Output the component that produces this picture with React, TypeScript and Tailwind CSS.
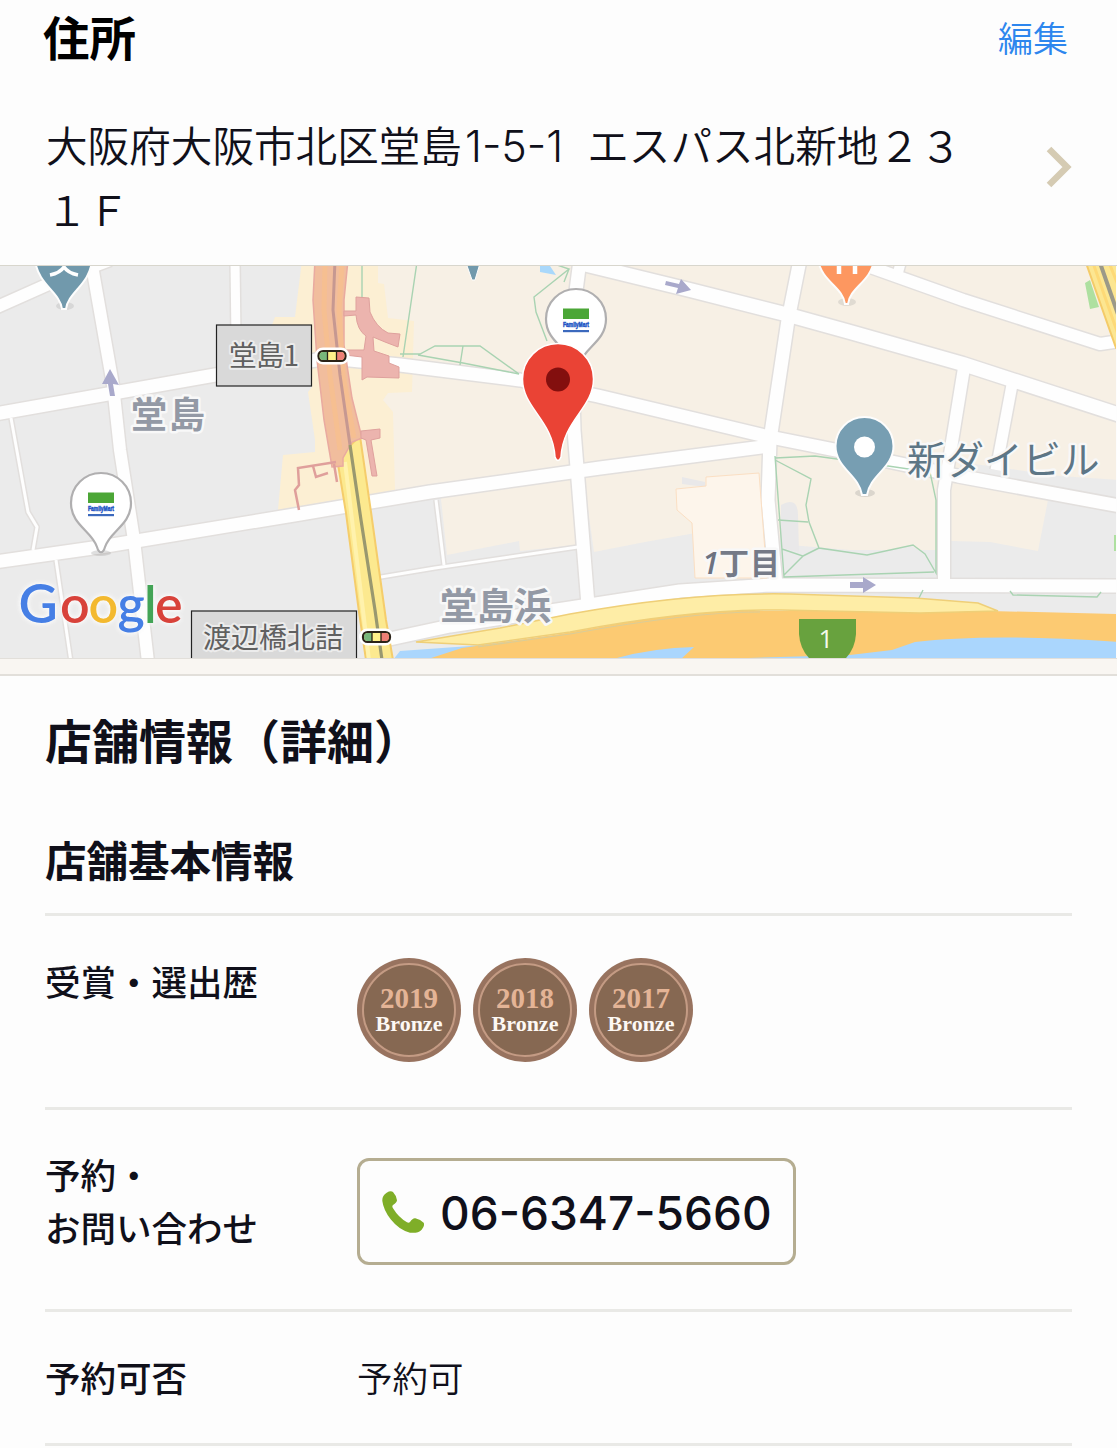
type Road = { d: string; w: number }

const roads: Road[] = [
    { d: "M-5 308 L60 279 L110 260", w: 12 },
    { d: "M91 260 L113 385 L120 450 L134 540 L148 662", w: 12 },
    { d: "M235 260 L236 340", w: 9 },
    { d: "M-5 414 L215 375 L330 358 L400 365 L520 380 L598 396 L765 436 L840 451 L958 476 L1120 506", w: 13 },
    { d: "M-5 562 L100 547 L300 514 L430 492 L600 468 L770 446", w: 13 },
    { d: "M580 260 L571 330 L574 430 L588 605", w: 13 },
    { d: "M575 262 L690 290 L785 314 L850 332 L963 364 L1120 415", w: 14 },
    { d: "M862 264 L963 300 L1100 344 L1120 341", w: 12 },
    { d: "M902 258 L897 276", w: 10 },
    { d: "M800 260 L788 320 L770 440 L768 500 L776 585", w: 13 },
    { d: "M964 368 L951 448 L944 490 L944 585", w: 12 },
    { d: "M1012 385 L996 470", w: 11 },
    { d: "M385 640 L450 626 L570 608 L680 591 L770 585 L1120 586", w: 13 },
    { d: "M375 578 L435 568 L578 547", w: 3 },
    { d: "M436 500 L444 565", w: 3 },
    { d: "M11 418 L28 512 L37 527 L33 550", w: 3 },
    { d: "M56 560 L71 662", w: 3 },
]

const logoLetters = [
    { char: "G", x: 18.5, color: "#467fe5" },
    { char: "o", x: 60, color: "#d8423a" },
    { char: "o", x: 88.5, color: "#f3b92f" },
    { char: "g", x: 117.5, color: "#467fe5" },
    { char: "l", x: 144, color: "#43a456" },
    { char: "e", x: 155, color: "#d8423a" },
]

const awards = ["2019", "2018", "2017"]

function StorePin({ x, y }: { x: number; y: number }) {
    return (
        <g transform={`translate(${x} ${y})`}>
            <ellipse cx="0" cy="50" rx="10" ry="3" fill="#999" opacity="0.3" />
            <path d="M0 -30 A30 30 0 0 1 30 0 C30 22 9 28 4 44 C2 51 -2 51 -4 44 C-9 28 -30 22 -30 0 A30 30 0 0 1 0 -30Z" fill="#fff" stroke="#b0afb0" strokeWidth="2.2" />
            <rect x="-13" y="-10.500" width="26" height="10.500" fill="#4ba636" />
            <text x="-13" y="8" fontSize="8" fontWeight="900" textLength="26" lengthAdjust="spacingAndGlyphs" fill="#2457c5" stroke="#2457c5" strokeWidth=".6" fontFamily="Liberation Sans, sans-serif">FamilyMart</text>
            <rect x="-13" y="11" width="26" height="2.2" fill="#3c69bd" />
        </g>
    )
}

function Signal({ x, y }: { x: number; y: number }) {
    return (
        <g transform={`translate(${x} ${y})`}>
            <rect x="-17.5" y="-8.5" width="35" height="17" rx="8.5" fill="#fff" />
            <rect x="-13.5" y="-5" width="27" height="10" rx="4.5" fill="#fff08a" stroke="#2b2318" strokeWidth="2.2" />
            <path d="M-4.5 -4 H-9 Q-12.5 -4 -12.5 0 Q-12.5 4 -9 4 H-4.5Z" fill="#78b77c" />
            <path d="M4.5 -4 H9 Q12.5 -4 12.5 0 Q12.5 4 9 4 H4.5Z" fill="#ee7f76" />
            <path d="M-4.5 -5 V5 M4.5 -5 V5" stroke="#2b2318" strokeWidth="1.3" />
        </g>
    )
}

function AreaMap() {
    return (
        <svg viewBox="0 266 1116 392" width="1116" height="392" className="block" fontFamily="'Noto Sans CJK JP', sans-serif">
            <rect y="260" width="1116" height="400" fill="#ebebeb" />
            {/* commercial blocks */}
            <g fill="#f7f0e5">
                <path d="M340 260 H1120 V480 L1060 476 L960 462 L960 486 L365 496Z" />
                <path d="M440 490 L575 475 L577 545 L520 551 L519 541 L447 555Z" />
                <path d="M583 474 L762 452 L772 520 L690 534 L645 542 L594 552Z" />
                <path d="M772 450 H938 V550 H850 L790 545 L777 540Z" />
                <path d="M950 476 L1048 500 L1038 551 L990 542 L951 541Z" />
            </g>
            <path d="M781 505 Q798 496 798 515 L799 552 L780 547Z M682 477 L705 482 V487 L682 484Z" fill="#e9e8e9" />
            <path d="M784 578 L825 550 L865 555 L912 546 L926 555 L936 576Z" fill="#ebebeb" />
            <path d="M302 260 L295 317 H275 L272 325 H312 V387 L308 392 L315 440 V452 L283 455 L278 510 L395 490 L393 412 L383 400 L388 393 L412 392 L414 321 L388 318 L384 284 L378 283 V260Z" fill="#fcefd3" />
            {/* roads */}
            <g fill="none" strokeLinejoin="round">
                {roads.map((r, i) => <path key={i} d={r.d} stroke="#e2dfdd" strokeWidth={r.w + 3} />)}
                {roads.map((r, i) => <path key={i} d={r.d} stroke="#fefefe" strokeWidth={r.w} />)}
            </g>
            <path d="M676 489 L706 486 V477 L759 473 L767 578 L695 578 L692 523 L677 510Z" fill="#fdf5eb" stroke="#fbdfc3" strokeWidth="1" />
            {/* footpaths */}
            <g fill="none" stroke="#a9d3b2" strokeWidth="1.4">
                <path d="M362 262 V300 M417 262 L403 357 M400 354 H420 L435 346 H480 L519 374 L463 363 L418 355 M463 346 L460 365" />
                <path d="M548 262 L569 269 L534 297 L536 312 L547 341 M569 269 L564 282" />
                <path d="M775 456 L784 577 L934 572 M775 460 L811 479 L806 505 L809 522 L819 548 L867 555 L913 545 L925 554 L936 573 L936 500 L930 472 L888 466 L815 456 L775 458 M778 520 L808 522 M782 549 L803 556 L784 575 M819 548 L803 556 M923 590 L918 600 M1010 591 L1013 595 L1097 597 L1101 592" />
            </g>
            <path d="M540 266 L550 266 L556 275 L540 272Z" fill="#a9d8fb" />
            {/* water and expressway */}
            <path d="M393 660 L400 651 L470 646 L560 635 L700 625 L1120 638 V660Z" fill="#aad6fd" />
            <path d="M425 660 L462 648 L560 634 L690 611 L990 611 L1120 614 V642 Q990 633 915 642 L892 650 L850 655 L680 660 L694 647 Q650 648 610 660Z" fill="#fcca72" />
            <path d="M416 642 L500 628 L570 614 Q690 592 790 594 L915 598 L978 603 L998 611 L920 613 L780 610 Q690 609 570 632 L478 645Z" fill="#feeda6" stroke="#efcf78" strokeWidth="1.5" />
            <path d="M478 647 L570 634 Q690 612 760 612" fill="none" stroke="#d9cd99" strokeWidth="1.2" />
            {/* north-south avenue */}
            <path d="M337 458 L346 513 L359 612 L366 660 H393 L386 620 L371 512 L360 436Z" fill="#fce98f" stroke="#f5cd6b" strokeWidth="2" />
            <path d="M345 462 L369 660" stroke="#fff2ad" strokeWidth="4" fill="none" />
            <path d="M315 260 L313 300 L317 360 L324 420 L332 467 L343 466 V458 L352 442 L362 438 L352 398 L344 345 V300 L348 260Z" fill="#f1bd9d" stroke="#e9aaa0" strokeWidth="1.5" />
            <path d="M325 262 L324 310 L330 375 L340 450 M342 262 L339 310 L343 375 L354 438" fill="none" stroke="#f6bf91" strokeWidth="5" />
            <path d="M335 260 L333 310 L340 375 L350 445" fill="none" stroke="#c69891" strokeWidth="3" />
            <path d="M350 445 L361 520 L375 610 L382 660" fill="none" stroke="#99986f" strokeWidth="3.2" />
            <g fill="#ecb4ae" stroke="#dfa19d" strokeWidth="1">
                <path d="M356 297 L369 298 L370 312 Q376 327 388 333 L400 334 L398 347 L385 342 L373 337 L374 351 L389 356 V363 L399 367 V378 L367 377 L362 380 V357 L345 355 V350 L364 350 L366 336 Q357 330 356 315 L344 316 V311 L356 311Z" />
                <path d="M361 431 L380 429 V438 L371 440 L377 476 L372 476 L366 440 L361 438Z" />
            </g>
            <path d="M336 462 L298 468 L299 485 L295 490 L299 510 M313 466 L316 477 L328 473 M334 464 L337 482" fill="none" stroke="#df9f9b" strokeWidth="2.5" />
            {/* east avenue */}
            <path d="M1085 260 L1116 348 L1125 350 V260Z" fill="#fce691" stroke="#f4cb69" strokeWidth="2" />
            <path d="M1099 260 L1120 320" stroke="#9b9988" strokeWidth="4" />
            <path d="M1092 260 L1120 340 M1108 260 L1120 290" stroke="#fdd977" strokeWidth="3" />
            <path d="M1085 283 L1090 280 L1099 307 L1090 309Z M1114 535 H1117 V551 H1114Z" fill="#aee0a0" />
            {/* direction arrows */}
            <g fill="#a9a9cb">
                <path d="M110 369 L119 385 L113 384 L115 396 L110 396 L108 384 L102 384Z" />
                <path d="M666 281 L679 284 L681 279 L691 290 L676 294 L678 288 L665 285Z" />
                <path d="M850 582 H863 V577 L876 585 L863 593 V588 H850Z" />
            </g>
            {/* place pins */}
            <ellipse cx="65" cy="306" rx="9" ry="4" fill="#888" opacity="0.2" />
            <path d="M35 260 C38 285 60 292 62 309 H66 C68 292 90 285 92 260Z" fill="#7199ac" stroke="#fdfdfd" strokeWidth="2" />
            <path d="M50 275 Q60 273 64 267 Q68 273 78 275" fill="none" stroke="#fff" strokeWidth="3.5" />
            <path d="M465 260 L472 280 H475 L481 260Z" fill="#7199ac" stroke="#fdfdfd" strokeWidth="1" />
            <ellipse cx="847" cy="302" rx="9" ry="4" fill="#888" opacity="0.2" />
            <path d="M818 260 C822 282 843 287 845 304 H848 C850 287 871 282 874 260Z" fill="#fd9760" stroke="#fdfdfd" strokeWidth="2" />
            <path d="M839 260 V274 M855 260 V274" stroke="#fff" strokeWidth="4.5" />
            <ellipse cx="865" cy="493" rx="10" ry="4" fill="#888" opacity="0.25" />
            <path d="M864.500 417 A29 29 0 0 1 893.500 446 C893.500 468 870 475 867 495 H862 C859 475 835.500 468 835.500 446 A29 29 0 0 1 864.500 417Z" fill="#779eb2" stroke="#fdfdfd" strokeWidth="2" />
            <circle cx="864.500" cy="447" r="10.500" fill="#fff" />
            <StorePin x={101} y={503} />
            <StorePin x={576} y={319} />
            <path d="M558 343.500 A35.500 35.500 0 0 1 593.500 379 C593.500 408 563 420 561 457 Q558 464 555 457 C553 420 522.500 408 522.500 379 A35.500 35.500 0 0 1 558 343.500Z" fill="#ea4335" stroke="#fff" strokeWidth="1.5" />
            <circle cx="558" cy="379.500" r="12" fill="#830f0e" />
            {/* labels */}
            <g stroke="#f8f8f8" strokeWidth="5" strokeLinejoin="round" paintOrder="stroke">
                <text x="131" y="428" fontSize="36" fontWeight="700" textLength="74" fill="#9399a5">堂島</text>
                <text x="440" y="620" fontSize="37" fontWeight="700" fill="#9399a5">堂島浜</text>
                <text x="702" y="574" fontSize="31" fontWeight="600" fill="#6d7280" fontStyle="italic" fontFamily="'Open Sans', sans-serif">1</text>
                <text x="719" y="574" fontSize="30" fontWeight="700" textLength="61" fill="#757a87">丁目</text>
                <text x="907" y="474" fontSize="38.500" fontWeight="400" fill="#5d7686">新ダイビル</text>
            </g>
            <g fill="#d9d9d9" stroke="#222" strokeWidth="1.2">
                <rect x="216.500" y="325" width="95" height="61" />
                <rect x="191.500" y="611" width="165" height="60" />
            </g>
            <g fill="#606060" stroke="#ececec" strokeWidth="4" strokeLinejoin="round" paintOrder="stroke" fontSize="28">
                <text x="229" y="366" textLength="70">堂島1</text>
                <text x="203" y="648" textLength="140">渡辺橋北詰</text>
            </g>
            <Signal x={332} y={356} />
            <Signal x={376.5} y={637} />
            <path d="M799 619 H856 V634 Q855 650 844 660 H811 Q800 650 799 634Z" fill="#68a23e" />
            <text x="826" y="648" fontSize="26" textAnchor="middle" fill="#f4f9ec" fontFamily="'Open Sans', sans-serif">1</text>
            <g className="[filter:drop-shadow(0_0_2px_#fafafa)_drop-shadow(0_0_2px_#fafafa)]" fontFamily="Lato, sans-serif" fontWeight="600">
                {logoLetters.map((l) => (
                    <text key={l.x} x={l.x} y="623" fontSize={l.char === "G" ? 54 : 52} fill={l.color}>{l.char}</text>
                ))}
            </g>
        </svg>
    )
}

function AwardBadge({ year }: { year: string }) {
    return (
        <div className="size-[104px] rounded-full bg-[#98735f] p-[5px]">
            <div className="flex size-full flex-col items-center rounded-full border-2 border-[#c49b84] bg-[#866852] pt-[20px] font-['Liberation_Serif',serif] font-bold">
                <span className="text-[29px] leading-[27px] text-[#e4b496]">{year}</span>
                <span className="text-[22px] leading-[24px] text-[#fdf8f4]">Bronze</span>
            </div>
        </div>
    )
}

function PhoneIcon() {
    return (
        <svg width="42" height="42" viewBox="0 0 126 126" fill="#7fae28">
            <path d="M14 5 Q26 -2 33 3 Q42 12 45 28 Q45 34 33 42 Q29 46 33 52 Q50 80 75 94 Q80 97 84 93 Q93 80 100 82 Q116 86 125 95 Q129 104 119 116 Q107 128 84 125 Q52 118 26 85 Q4 56 1 30 Q0 13 14 5Z" />
        </svg>
    )
}

export default function App() {
    return (
        <main className="h-[1448px] w-[1117px] overflow-hidden bg-[#fdfdfd] font-['Noto_Sans_CJK_JP',sans-serif] text-[#10101a]">
            <section className="h-[265px]">
                <div className="flex h-[73px] items-center justify-between pl-[43px] pr-[49px]">
                    <h2 className="text-[46.500px] font-bold leading-none text-black">住所</h2>
                    <a className="text-[35px] font-[350] leading-none text-[#2d86ee]">編集</a>
                </div>
                <div className="flex items-start justify-between pt-[40px] pr-[44px] pl-[46px]">
                    <p className="text-[41.600px] font-[350] leading-[62px] whitespace-nowrap">
                        大阪府大阪市北区堂島<span className="inline-block w-[116px] pl-[3px] font-['Inter',sans-serif] text-[43px] font-light">1-5-1</span> エスパス北新地２３<br />１Ｆ
                    </p>
                    <svg className="mt-8" width="28" height="44" viewBox="0 0 28 44" fill="none" stroke="#d5cbb3" strokeWidth="6.500">
                        <path d="M4 4 L22 22 L4 40" />
                    </svg>
                </div>
            </section>

            <section className="border-t border-[#d8d6cd]">
                <AreaMap />
            </section>
            <div className="h-[18px] border-t border-b-2 border-[#e2dfda] bg-[#f9f6f2]" />

            <section className="px-[45px]">
                <h2 className="pt-[33px] text-[47px] font-bold leading-[60px]">店舗情報（詳細）</h2>
                <h3 className="pt-[64px] text-[41.500px] font-bold leading-[52px]">店舗基本情報</h3>

                <dl className="mt-[28px] text-[35.500px] leading-[53px]">
                    <div className="flex h-[194px] border-t-[3px] border-[#e9e9e6] pt-[38px]">
                        <dt className="w-[312px] font-medium">受賞・選出歴</dt>
                        <dd className="mt-1 flex gap-3">
                            {awards.map((year) => <AwardBadge key={year} year={year} />)}
                        </dd>
                    </div>
                    <div className="flex h-[202px] border-t-[3px] border-[#e9e9e6] pt-[37px]">
                        <dt className="w-[312px] font-medium">予約・<br />お問い合わせ</dt>
                        <dd className="mt-[11px]">
                            <a className="flex h-[107px] w-[439px] items-center gap-4 rounded-xl border-[3px] border-[#b5ad91] pl-[22px]">
                                <PhoneIcon />
                                <span className="pt-[3px] font-['Inter',sans-serif] text-[46px] font-medium">06-6347-5660</span>
                            </a>
                        </dd>
                    </div>
                    <div className="flex h-[137px] border-y-[3px] border-[#e9e9e6] pt-[38px]">
                        <dt className="w-[312px] font-medium">予約可否</dt>
                        <dd className="font-[350]">予約可</dd>
                    </div>
                </dl>
            </section>
        </main>
    )
}
